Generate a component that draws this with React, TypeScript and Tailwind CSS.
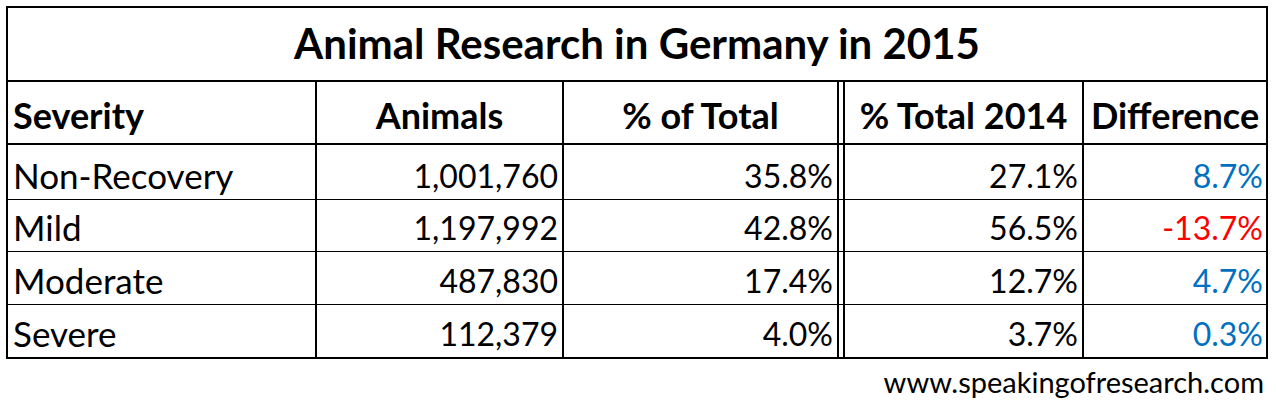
import React from "react";

const rows = [
  { severity: "Non-Recovery", animals: "1,001,760", pct: "35.8%", prev: "27.1%", diff: "8.7%", neg: false, h: "h-[55px]" },
  { severity: "Mild", animals: "1,197,992", pct: "42.8%", prev: "56.5%", diff: "-13.7%", neg: true, h: "h-[52px]" },
  { severity: "Moderate", animals: "487,830", pct: "17.4%", prev: "12.7%", diff: "4.7%", neg: false, h: "h-[53px]" },
  { severity: "Severe", animals: "112,379", pct: "4.0%", prev: "3.7%", diff: "0.3%", neg: false, h: "h-[52px]" },
];

const grid = "grid grid-cols-[309px_247px_275px_4px_241px_182px]";

const App = () => {
  return (
    <div
      className="w-[1276px] h-[403px] bg-white text-black overflow-hidden"
      style={{ fontFamily: "Lato, 'Open Sans', sans-serif" }}
    >
      <div className="ml-[6px] mt-[6px] w-[1262px] border-2 border-black">
        {/* Title */}
        <div className="h-[74px] border-b-2 border-black flex items-center justify-center pb-[2px] text-[42px] leading-none font-bold">
          Animal Research in Germany in 2015
        </div>

        {/* Header */}
        <div className={`${grid} h-[63px] border-b-2 border-black text-[36px] leading-none font-bold`}>
          <div className="border-r-2 border-black flex items-end pb-[10px] pl-[5px]">Severity</div>
          <div className="border-r-2 border-black flex items-end justify-center pb-[10px]">Animals</div>
          <div className="border-r-2 border-black flex items-end justify-center pb-[10px]">% of Total</div>
          <div />
          <div className="border-x-2 border-black flex items-end justify-center pb-[10px]">% Total 2014</div>
          <div className="flex items-end justify-center pb-[10px]">Difference</div>
        </div>

        {/* Data */}
        {rows.map((r, i) => (
          <div
            key={i}
            className={`${grid} ${r.h} leading-none ${i < rows.length - 1 ? "border-b border-black" : ""}`}
          >
            <div className="border-r-2 border-black flex items-end pb-[6px] pl-[5px] text-[35px]">{r.severity}</div>
            <div className="border-r-2 border-black flex items-end justify-end pb-[7px] pr-[4px] text-[32px] tabular-nums">
              {r.animals}
            </div>
            <div className="border-r-2 border-black flex items-end justify-end pb-[7px] pr-[4px] text-[32px] tabular-nums">
              {r.pct}
            </div>
            <div />
            <div className="border-x-2 border-black flex items-end justify-end pb-[7px] pr-[4px] text-[32px] tabular-nums">
              {r.prev}
            </div>
            <div
              className={`flex items-end justify-end pb-[7px] pr-[3px] text-[32px] tabular-nums ${r.neg ? "text-[#ff0000]" : "text-[#0070c0]"}`}
            >
              {r.diff}
            </div>
          </div>
        ))}
      </div>

      <div className="text-right pr-[12px] pt-[8px] text-[29px] leading-none">www.speakingofresearch.com</div>
    </div>
  );
};

export default App;
